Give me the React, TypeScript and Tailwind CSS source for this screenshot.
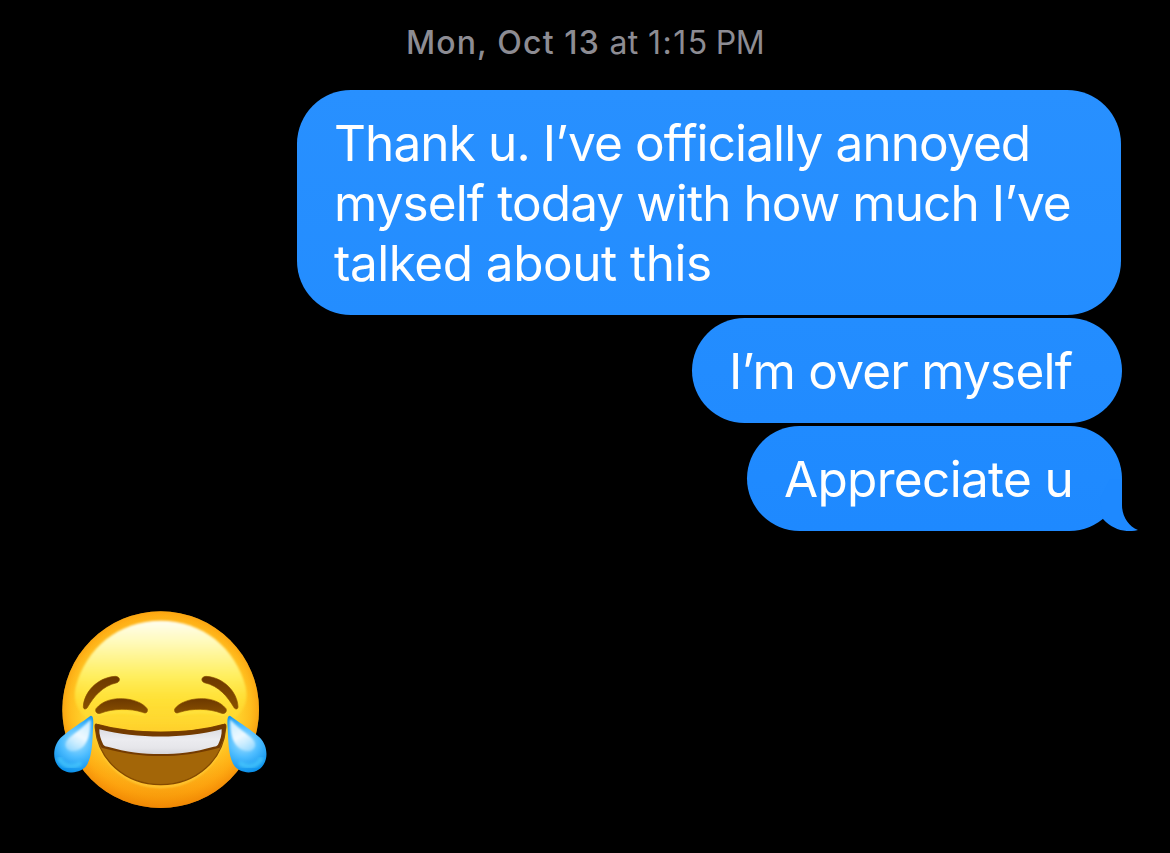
import React from "react";
import clsx from "clsx";

type Message = {
  lines: { text: string; tracking: string }[];
  className: string;
  tail?: boolean;
};

const messages: Message[] = [
  {
    lines: [
      { text: "Thank u. I’ve officially annoyed", tracking: "tracking-[-0.89px]" },
      { text: "myself today with how much I’ve", tracking: "tracking-[-0.92px]" },
      { text: "talked about this", tracking: "tracking-[-0.5px]" },
    ],
    className:
      "mr-px h-[225px] w-[824px] rounded-[54px] from-[#2890ff] to-[#238dff]",
  },
  {
    lines: [{ text: "I’m over myself", tracking: "tracking-[-0.8px]" }],
    className: "h-[105px] w-[430px] rounded-[52.5px] from-[#238dff] to-[#218bff]",
  },
  {
    lines: [{ text: "Appreciate u", tracking: "tracking-[-0.68px]" }],
    className: "h-[105px] w-[375px] rounded-[52.5px] from-[#208bff] to-[#1e89ff]",
    tail: true,
  },
];

function Bubble({ lines, className, tail }: Message) {
  return (
    <div
      className={clsx(
        "relative bg-linear-to-b pl-[37px] pt-[23px] text-[49.5px] leading-[60px] text-white",
        className
      )}
    >
      {lines.map((line) => (
        <p key={line.text} className={clsx("w-fit whitespace-nowrap", line.tracking)}>
          {line.text}
        </p>
      ))}
      {tail && (
        <svg
          className="absolute -right-4 bottom-0 h-[52px] w-[38px]"
          viewBox="0 0 38 52"
          fill="#1e89ff"
        >
          <path d="M0 20 L10 0 H22 V26 C22 37 28 47 38 51 C26 54 13 51 3 40 Z" />
        </svg>
      )}
    </div>
  );
}

function Tear() {
  return (
    <g>
      <path
        d="M136 348 C145 345 146 360 144 385 C142 425 142 470 125 496 C108 522 62 525 41 500 C20 476 25 435 47 413 C78 386 112 366 136 348 Z"
        fill="url(#tear)"
      />
      <path
        d="M137 358 C137 388 134 418 116 438 C100 454 76 458 66 446 C56 434 64 420 80 408 C102 391 120 376 137 358 Z"
        fill="url(#glint)"
        filter="url(#edge)"
      />
      <path
        d="M44 478 C56 500 84 504 104 492"
        stroke="#4fd0ff"
        strokeWidth="14"
        strokeLinecap="round"
        opacity="0.6"
        filter="url(#soft)"
      />
    </g>
  );
}

function JoyEmoji() {
  return (
    <svg className="h-[220px] w-[230px]" viewBox="0 0 690 660" fill="none">
      <defs>
        <linearGradient id="face" x1="0" y1="33" x2="0" y2="624" gradientUnits="userSpaceOnUse">
          <stop offset="0" stopColor="#ffbc20" />
          <stop offset="0.3" stopColor="#ffd12c" />
          <stop offset="0.55" stopColor="#ffd52e" />
          <stop offset="0.75" stopColor="#ffc021" />
          <stop offset="0.9" stopColor="#fba916" />
          <stop offset="1" stopColor="#ee970c" />
        </linearGradient>
        <radialGradient id="rim" cx="347" cy="318" r="306" gradientUnits="userSpaceOnUse">
          <stop offset="0.74" stopColor="#ff9800" stopOpacity="0" />
          <stop offset="0.88" stopColor="#ff9400" stopOpacity="0.35" />
          <stop offset="1" stopColor="#f08000" stopOpacity="0.7" />
        </radialGradient>
        <linearGradient id="shine" x1="0" y1="62" x2="0" y2="400" gradientUnits="userSpaceOnUse">
          <stop offset="0" stopColor="#fffef0" />
          <stop offset="0.2" stopColor="#fffab8" />
          <stop offset="0.5" stopColor="#fff060" stopOpacity="0.95" />
          <stop offset="0.7" stopColor="#ffe83c" stopOpacity="0.65" />
          <stop offset="1" stopColor="#ffdd30" stopOpacity="0" />
        </linearGradient>
        <linearGradient id="brown" x1="0" y1="0" x2="0" y2="1">
          <stop offset="0" stopColor="#6c3800" />
          <stop offset="1" stopColor="#885000" />
        </linearGradient>
        <linearGradient id="teeth" x1="0" y1="388" x2="0" y2="462" gradientUnits="userSpaceOnUse">
          <stop offset="0" stopColor="#dcdce2" />
          <stop offset="0.4" stopColor="#ececf0" />
          <stop offset="0.75" stopColor="#e6e6ea" />
          <stop offset="1" stopColor="#d6d6db" />
        </linearGradient>
        <radialGradient id="tear" cx="96" cy="425" r="94" gradientUnits="userSpaceOnUse">
          <stop offset="0" stopColor="#a8e2ff" />
          <stop offset="0.5" stopColor="#4cbcff" />
          <stop offset="1" stopColor="#0a90ea" />
        </radialGradient>
        <linearGradient id="glint" x1="130" y1="360" x2="76" y2="456" gradientUnits="userSpaceOnUse">
          <stop offset="0" stopColor="#c4ecff" />
          <stop offset="0.5" stopColor="#eef9ff" />
          <stop offset="1" stopColor="#b4e4ff" stopOpacity="0.55" />
        </linearGradient>
        <filter id="soft" x="-20%" y="-20%" width="140%" height="140%">
          <feGaussianBlur stdDeviation="5" />
        </filter>
        <filter id="edge" x="-10%" y="-10%" width="120%" height="120%">
          <feGaussianBlur stdDeviation="3" />
        </filter>
      </defs>

      <circle cx="347" cy="329" r="295" fill="url(#face)" />
      <circle cx="347" cy="329" r="295" fill="url(#rim)" />
      <path
        d="M347 62 C470 62 572 142 602 262 C618 340 560 400 347 400 C134 400 76 340 92 262 C122 142 224 62 347 62 Z"
        fill="url(#shine)"
        filter="url(#edge)"
      />

      {/* brows */}
      <g fill="url(#brown)" stroke="#8a5000" strokeWidth="2">
        <path d="M115 320 C117 276 158 232 211 229 C226 230 227 244 216 248 C171 258 146 291 128 321 C123 330 115 328 115 320 Z" />
        <path d="M579 320 C577 276 536 232 483 229 C468 230 467 244 478 248 C523 258 548 291 566 321 C571 330 579 328 579 320 Z" />
      </g>

      {/* closed eyes */}
      <g stroke="#ffe94a" strokeWidth="7" opacity="0.55" filter="url(#edge)">
        <path d="M154 345 C202 331 259 335 300 345" />
        <path d="M540 345 C492 331 435 335 394 345" />
      </g>
      <g fill="url(#brown)" stroke="#8a5000" strokeWidth="2">
        <path d="M153 326 C172 302 203 295 232 296 C263 297 294 308 307 327 C309 338 302 341 293 337 C254 324 203 325 166 340 C157 343 149 335 153 326 Z" />
        <path d="M543 326 C524 302 493 295 464 296 C433 297 402 308 389 327 C387 338 394 341 403 337 C442 324 493 325 530 340 C539 343 547 335 543 326 Z" />
      </g>

      {/* mouth */}
      <path
        d="M152 390 C162 480 238 560 347 560 C456 560 532 480 542 390"
        stroke="#ffcf3b"
        strokeWidth="6"
        filter="url(#edge)"
      />
      <path
        d="M156 373 C265 404 430 404 537 373 C542 371 543 377 542 384 C535 478 456 554 347 554 C238 554 159 478 151 384 C150 375 151 371 156 373 Z"
        fill="#a36608"
        stroke="#844a00"
        strokeWidth="4"
      />
      <path
        d="M156 373 C265 404 430 404 537 373 C542 371 543 377 542 384 C539 408 533 428 524 443 C460 461 400 468 347 468 C294 468 234 461 170 443 C160 428 154 406 151 384 C150 375 151 371 156 373 Z"
        fill="#743b00"
      />
      <path
        d="M163 388 C280 417 414 417 530 388 C531 404 526 421 519 434 C516 438 512 439 506 440 C450 456 400 462 347 462 C294 462 244 456 188 440 C182 439 178 438 175 434 C168 421 162 404 163 388 Z"
        fill="url(#teeth)"
      />

      <Tear />
      <g transform="matrix(-1 0 0 1 692 0)">
        <Tear />
      </g>
    </svg>
  );
}

export default function App() {
  return (
    <main className="h-[853px] w-[1170px] overflow-hidden bg-black pt-[23px] font-['Inter','Liberation_Sans',sans-serif]">
      <div className="flex h-[67px] justify-center whitespace-pre text-[32px] leading-[40px] text-[#8d8c93]">
        <span className="font-medium tracking-[1.15px]">Mon, Oct 13</span>
        <span className="tracking-[0.4px]"> at </span>
        <span className="tracking-[1.5px]">1:15</span>
        <span className="ml-[7px] tracking-[-0.5px]">PM</span>
      </div>
      <section className="flex flex-col items-end gap-[3px] pr-12">
        {messages.map((message) => (
          <Bubble key={message.lines[0].text} {...message} />
        ))}
      </section>
      <div className="ml-[45px] mt-[69px]">
        <JoyEmoji />
      </div>
    </main>
  );
}
